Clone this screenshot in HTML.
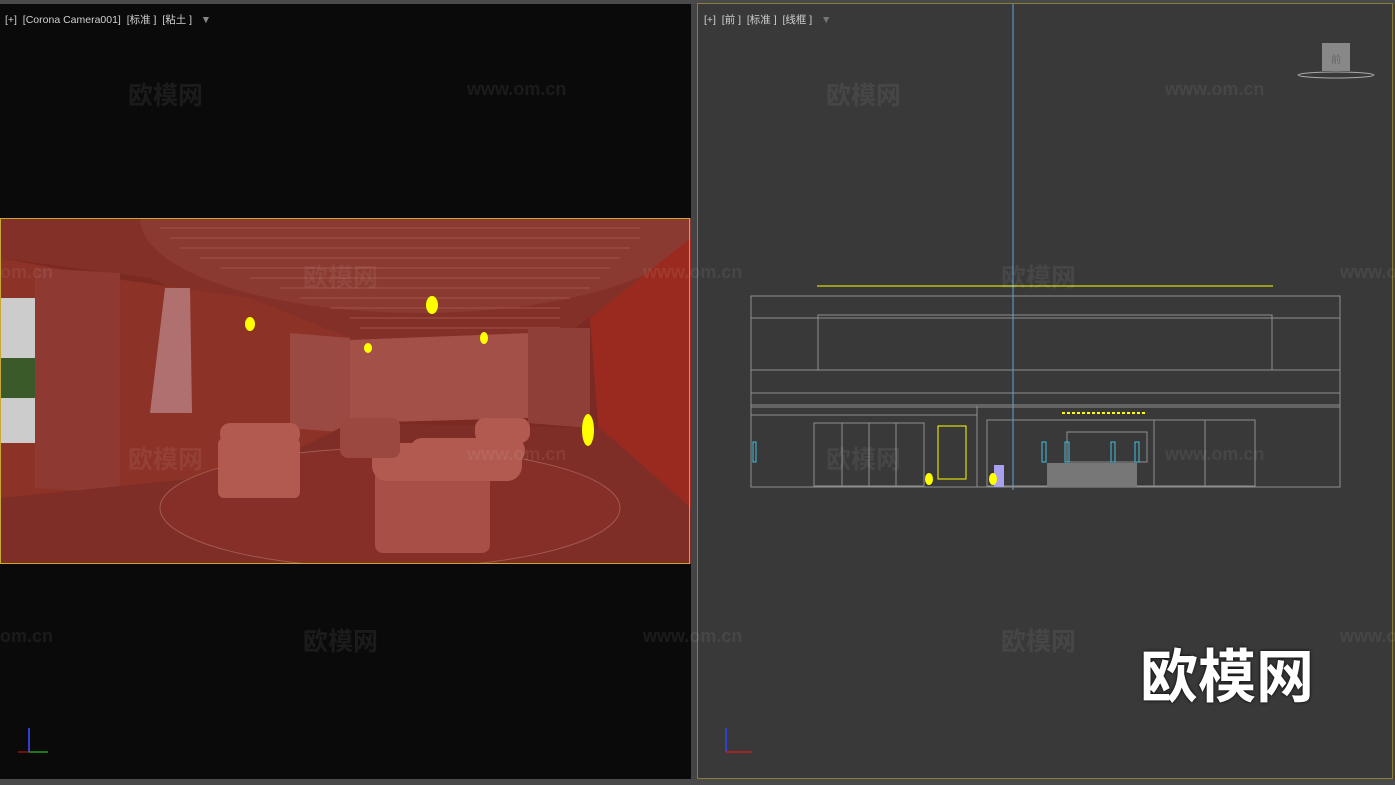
<!DOCTYPE html>
<html><head><meta charset="utf-8"><style>
body{margin:0;width:1395px;height:785px;background:#444;position:relative;overflow:hidden;font-family:"Liberation Sans","Noto Sans CJK SC",sans-serif}
.vp{position:absolute}
.lbl{position:absolute;top:12px;font-size:10.5px;color:#d0d0d0;white-space:nowrap}
.wm{position:absolute;color:rgba(255,255,255,0.07);font-weight:bold;font-size:25px;font-family:"Liberation Sans","Noto Sans CJK SC",sans-serif;white-space:nowrap}
.wm2{position:absolute;color:rgba(255,255,255,0.07);font-weight:bold;font-size:18px;white-space:nowrap}
</style></head><body>
<div style="position:absolute;left:0;top:0;width:1395px;height:4px;background:#4a4a4a"></div>
<div class="vp" style="left:0;top:4px;width:691px;height:775px;background:#0a0a0a"></div>
<div class="vp" style="left:697px;top:3px;width:694px;height:774px;background:#393939;border:1px solid #8c7c3c"></div>
<div style="position:absolute;left:0;top:779px;width:1395px;height:6px;background:#4a4a4a"></div>

<div class="lbl" style="left:5px">[+]&nbsp; [Corona Camera001]&nbsp; [标准 ]&nbsp; [粘土 ]&nbsp;&nbsp; <span style="color:#888">▼</span></div>
<div class="lbl" style="left:704px">[+]&nbsp; [前 ]&nbsp; [标准 ]&nbsp; [线框 ]&nbsp;&nbsp; <span style="color:#777">▼</span></div>

<svg style="position:absolute;left:0;top:218px" width="691" height="346" viewBox="0 0 691 346">
<rect x="0" y="0" width="691" height="346" fill="#7a2a22"/>
<polygon points="0,0 691,0 691,30 560,120 300,130 150,60 0,40" fill="#833028"/>
<ellipse cx="420" cy="0" rx="280" ry="95" fill="#8a3a30"/>
<g stroke="#a0524a" stroke-width="1">
<line x1="160" y1="10" x2="640" y2="10"/><line x1="170" y1="20" x2="640" y2="20"/><line x1="180" y1="30" x2="630" y2="30"/><line x1="200" y1="40" x2="620" y2="40"/><line x1="220" y1="50" x2="610" y2="50"/><line x1="250" y1="60" x2="600" y2="60"/><line x1="280" y1="70" x2="590" y2="70"/><line x1="300" y1="80" x2="570" y2="80"/><line x1="330" y1="90" x2="560" y2="90"/><line x1="350" y1="100" x2="560" y2="100"/><line x1="360" y1="110" x2="560" y2="110"/>
</g>
<polygon points="0,40 110,60 250,80 350,120 350,230 250,255 110,270 0,280" fill="#8c3226"/>
<polygon points="35,50 120,55 120,275 35,270" fill="#8e3a32"/>
<polygon points="0,80 35,80 35,225 0,225" fill="#ccc"/>
<rect x="0" y="140" width="35" height="40" fill="#3a5a2a"/>
<polygon points="165,70 190,70 192,195 150,195" fill="#b07070"/>
<polygon points="290,115 350,120 350,215 290,210" fill="#9a4a42"/>
<polygon points="350,122 530,115 530,200 350,205" fill="#a25048"/>
<polygon points="528,110 590,110 590,210 528,205" fill="#8e4038"/>
<polygon points="590,100 691,20 691,290 600,230" fill="#9a2a20"/>
<polygon points="0,280 250,255 350,205 600,210 691,290 691,346 0,346" fill="#7e2e26"/>
<ellipse cx="390" cy="290" rx="230" ry="60" fill="#852f28" stroke="#a25a52"/>
<g fill="#b25a50">
<rect x="218" y="220" width="82" height="60" rx="6"/><rect x="220" y="205" width="80" height="22" rx="10"/>
<rect x="375" y="245" width="115" height="90" rx="8" fill="#a85048"/><rect x="372" y="225" width="150" height="38" rx="15"/><rect x="410" y="220" width="115" height="25" rx="12"/>
<rect x="340" y="200" width="60" height="40" rx="8" fill="#9a4840"/><rect x="475" y="200" width="55" height="25" rx="10"/>
</g>
<g fill="#ffff00">
<ellipse cx="432" cy="87" rx="6" ry="9"/><ellipse cx="250" cy="106" rx="5" ry="7"/><ellipse cx="484" cy="120" rx="4" ry="6"/><ellipse cx="368" cy="130" rx="4" ry="5"/><ellipse cx="588" cy="212" rx="6" ry="16"/>
</g>
<rect x="0.5" y="0.5" width="689" height="345" fill="none" stroke="#c8a830"/>
</svg>

<svg style="position:absolute;left:697px;top:0" width="698" height="785">
<line x1="316" y1="4" x2="316" y2="490" stroke="#5aa8e0"/>
<line x1="120" y1="286" x2="576" y2="286" stroke="#ffff00"/>
<g fill="none" stroke="#909090">
<rect x="54" y="296" width="589" height="191"/>
<rect x="121" y="315" width="454" height="55"/>
<line x1="54" y1="318" x2="643" y2="318"/><line x1="54" y1="370" x2="643" y2="370"/><line x1="54" y1="393" x2="643" y2="393"/><line x1="54" y1="405" x2="643" y2="405"/><line x1="54" y1="407" x2="643" y2="407"/>
<line x1="54" y1="415" x2="280" y2="415"/><line x1="280" y1="406" x2="280" y2="487"/>
<rect x="117" y="423" width="110" height="63"/><line x1="145" y1="423" x2="145" y2="486"/><line x1="172" y1="423" x2="172" y2="486"/><line x1="199" y1="423" x2="199" y2="486"/>
<rect x="290" y="420" width="268" height="66"/><line x1="457" y1="420" x2="457" y2="486"/><line x1="508" y1="420" x2="508" y2="486"/>
<rect x="370" y="432" width="80" height="30"/>
</g>
<rect x="241" y="426" width="28" height="53" fill="none" stroke="#ffff00"/>
<rect x="350" y="463" width="90" height="24" fill="#777"/>
<rect x="297" y="465" width="10" height="22" fill="#a8a0f0"/>
<g fill="none" stroke="#40c0e0"><rect x="345" y="442" width="4" height="20"/><rect x="368" y="442" width="4" height="20"/><rect x="414" y="442" width="4" height="20"/><rect x="438" y="442" width="4" height="20"/><rect x="56" y="442" width="3" height="20"/></g>
<ellipse cx="232" cy="479" rx="4" ry="6" fill="#ff0"/><ellipse cx="296" cy="479" rx="4" ry="6" fill="#ff0"/>
<line x1="365" y1="413" x2="450" y2="413" stroke="#ff0" stroke-width="2" stroke-dasharray="3 2"/>
<rect x="625" y="43" width="28" height="28" fill="#888"/>
<ellipse cx="639" cy="75" rx="38" ry="3" fill="none" stroke="#aaa"/>
<text x="639" y="63" font-size="10" fill="#666" text-anchor="middle" font-family="Liberation Sans">前</text>
<line x1="29" y1="752" x2="29" y2="728" stroke="#3040d0" stroke-width="2"/><line x1="29" y1="752" x2="55" y2="752" stroke="#c02020" stroke-width="1.5"/>
</svg>
<svg style="position:absolute;left:0;top:0" width="60" height="785">
<line x1="29" y1="752" x2="29" y2="728" stroke="#3040d0" stroke-width="2"/><line x1="29" y1="752" x2="48" y2="752" stroke="#20a020" stroke-width="1.5"/><line x1="29" y1="752" x2="18" y2="752" stroke="#c02020"/>
</svg>

<div class="wm" style="left:128px;top:76px">欧模网</div>
<div class="wm2" style="left:467px;top:79px">www.om.cn</div>
<div class="wm" style="left:826px;top:76px">欧模网</div>
<div class="wm2" style="left:1165px;top:79px">www.om.cn</div>
<div class="wm" style="left:303px;top:258px">欧模网</div>
<div class="wm2" style="left:643px;top:262px">www.om.cn</div>
<div class="wm" style="left:1001px;top:258px">欧模网</div>
<div class="wm2" style="left:1340px;top:262px">www.om.cn</div>
<div class="wm2" style="left:0;top:262px">om.cn</div>
<div class="wm" style="left:128px;top:440px">欧模网</div>
<div class="wm2" style="left:467px;top:444px">www.om.cn</div>
<div class="wm" style="left:826px;top:440px">欧模网</div>
<div class="wm2" style="left:1165px;top:444px">www.om.cn</div>
<div class="wm" style="left:303px;top:622px">欧模网</div>
<div class="wm2" style="left:643px;top:626px">www.om.cn</div>
<div class="wm" style="left:1001px;top:622px">欧模网</div>
<div class="wm2" style="left:1340px;top:626px">www.om.cn</div>
<div class="wm2" style="left:0;top:626px">om.cn</div>
<div style="position:absolute;left:1140px;top:638px;font-size:58px;font-weight:bold;color:#fff;font-family:'Noto Sans CJK SC',sans-serif;line-height:68px;text-shadow:0 0 3px #000">欧模网</div>
</body></html>
